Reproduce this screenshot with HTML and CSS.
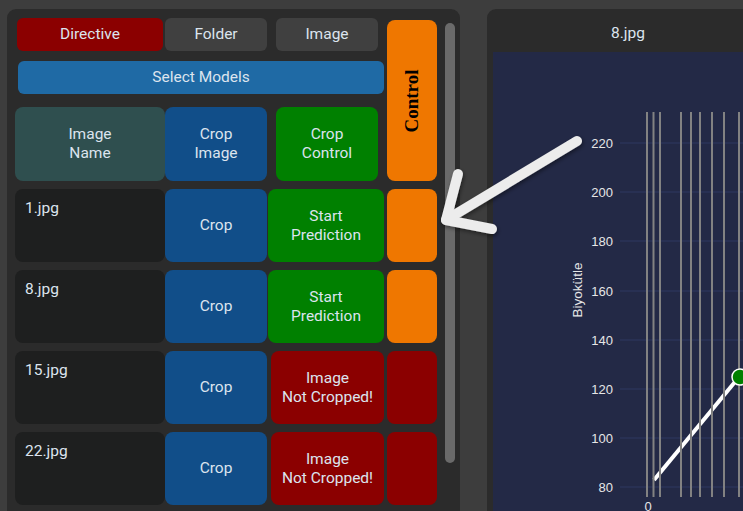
FILE: index.html
```html
<!DOCTYPE html>
<html>
<head>
<meta charset="utf-8">
<link rel="stylesheet" href="styles.css">
</head>
<body>
<div class="app">
  <section class="left-panel">
    <div class="table">
      <div class="btn red c0 r0 directive">Directive</div>
      <div class="btn gray c1 r0 mr1">Folder</div>
      <div class="btn gray c2 r0 image-btn">Image</div>
      <div class="control-head"><span>Control</span></div>

      <div class="btn blue select-models">Select Models</div>

      <div class="cell slate c0 r2">Image<br>Name</div>
      <div class="cell navy c1 r2 mr1">Crop<br>Image</div>
      <div class="cell green c2 r2 image-btn">Crop<br>Control</div>

      <div class="cell name c0 r3">1.jpg</div>
      <div class="cell navy c1 r3 mr1">Crop</div>
      <div class="cell green c2 r3">Start<br>Prediction</div>
      <div class="cell orange c3 r3"></div>

      <div class="cell name c0 r4">8.jpg</div>
      <div class="cell navy c1 r4 mr1">Crop</div>
      <div class="cell green c2 r4">Start<br>Prediction</div>
      <div class="cell orange c3 r4"></div>

      <div class="cell name c0 r5">15.jpg</div>
      <div class="cell navy c1 r5 mr1">Crop</div>
      <div class="cell red c2 r5 ml3">Image<br>Not Cropped!</div>
      <div class="cell red c3 r5"></div>

      <div class="cell name c0 r6">22.jpg</div>
      <div class="cell navy c1 r6 mr1">Crop</div>
      <div class="cell red c2 r6 ml3">Image<br>Not Cropped!</div>
      <div class="cell red c3 r6"></div>
    </div>
    <div class="scrollbar"></div>
  </section>

  <section class="right-panel">
    <div class="chart-title">8.jpg</div>
    <div class="chart">
      <svg class="chart-svg" width="276" height="460" viewBox="493 52 276 460">
        <g class="grid-h" stroke="#2e3961" stroke-width="1">
          <line x1="620" y1="143" x2="770" y2="143"/>
          <line x1="620" y1="192" x2="770" y2="192"/>
          <line x1="620" y1="241" x2="770" y2="241"/>
          <line x1="620" y1="291" x2="770" y2="291"/>
          <line x1="620" y1="340" x2="770" y2="340"/>
          <line x1="620" y1="389" x2="770" y2="389"/>
          <line x1="620" y1="438" x2="770" y2="438"/>
          <line x1="620" y1="487" x2="770" y2="487"/>
        </g>
        <g class="ylabels" fill="#e6e6e6" font-family="Liberation Sans, Arial, sans-serif" font-size="13" text-anchor="end">
          <text x="613" y="148">220</text>
          <text x="613" y="197">200</text>
          <text x="613" y="246">180</text>
          <text x="613" y="296">160</text>
          <text x="613" y="345">140</text>
          <text x="613" y="394">120</text>
          <text x="613" y="443">100</text>
          <text x="613" y="492">80</text>
        </g>
        <text x="648" y="511" fill="#e6e6e6" font-family="Liberation Sans, Arial, sans-serif" font-size="13" text-anchor="middle">0</text>
        <text transform="translate(582 290) rotate(-90)" fill="#e6e6e6" font-family="Liberation Sans, Arial, sans-serif" font-size="13.5" text-anchor="middle">Biyokütle</text>
        <line x1="654" y1="480" x2="739" y2="377" stroke="#ffffff" stroke-width="4"/>
        <g stroke="#828282" stroke-width="2">
          <line x1="647" y1="112" x2="647" y2="497"/>
          <line x1="653.5" y1="112" x2="653.5" y2="497"/>
          <line x1="660" y1="112" x2="660" y2="497"/>
          <line x1="681" y1="112" x2="681" y2="497"/>
          <line x1="691" y1="112" x2="691" y2="497"/>
          <line x1="700" y1="112" x2="700" y2="497"/>
          <line x1="712" y1="112" x2="712" y2="497"/>
          <line x1="724" y1="112" x2="724" y2="497"/>
          <line x1="739" y1="112" x2="739" y2="497"/>
          <line x1="758" y1="112" x2="758" y2="497"/>
        </g>
        <circle cx="740" cy="377" r="8" fill="#008000" stroke="#ffffff" stroke-width="1.5"/>
      </svg>
    </div>
  </section>

  <svg class="arrow" width="743" height="511" viewBox="0 0 743 511">
    <defs>
      <filter id="sh" x="-20%" y="-20%" width="140%" height="140%">
        <feDropShadow dx="1" dy="2" stdDeviation="2" flood-color="#000" flood-opacity="0.45"/>
      </filter>
    </defs>
    <g filter="url(#sh)" stroke="#ececec" stroke-width="10" stroke-linecap="round" stroke-linejoin="round" fill="none">
      <path d="M577 141 L446 220"/>
      <path d="M458 174 L446 220 L492 229"/>
    </g>
  </svg>
</div>
</body>
</html>
```
FILE: styles.css
```css
html, body {
  margin: 0;
  padding: 0;
}
body {
  width: 743px;
  height: 511px;
  overflow: hidden;
  background: #3d3d3d;
  font-family: Roboto, "Noto Sans", sans-serif;
  font-size: 15.5px;
  color: #dce4ee;
}
.app {
  position: relative;
  width: 743px;
  height: 511px;
  display: flex;
  align-items: flex-start;
  padding: 9px 0 0 7px;
  box-sizing: border-box;
  gap: 27px;
}
.left-panel {
  display: flex;
  align-items: flex-start;
  background: #2b2b2b;
  border-radius: 9px 9px 0 0;
  width: 453px;
  height: 520px;
  padding: 9px 5px 0 8px;
  box-sizing: border-box;
  flex: none;
}
.table {
  display: grid;
  grid-template-columns: 150px 103px 116px 56px;
  grid-template-rows: 43px 46px 82px 81px 81px 81px 81px;
  width: 425px;
  flex: none;
}
.scrollbar {
  width: 10px;
  height: 440px;
  margin-top: 5px;
  margin-left: 5px;
  border-radius: 5px;
  background: #6a6a6a;
  flex: none;
}
.btn, .cell {
  display: flex;
  align-items: center;
  justify-content: center;
  text-align: center;
  line-height: 19px;
  box-sizing: border-box;
}
.btn {
  height: 33px;
  border-radius: 6px;
}
.cell {
  border-radius: 8px;
  height: 73px;
}
.r2 { height: 74px; }

.c0 { grid-column: 1; }
.c1 { grid-column: 2; }
.c2 { grid-column: 3; }
.c3 { grid-column: 4; margin: 0 3px; }
.r0 { grid-row: 1; }
.r2 { grid-row: 3; }
.r3 { grid-row: 4; }
.r4 { grid-row: 5; }
.r5 { grid-row: 6; }
.r6 { grid-row: 7; }

.directive { margin: 0 2px; }
.mr1 { margin-right: 1px; }
.ml3 { margin-left: 3px; }
.image-btn { margin: 0 6px 0 8px; }

.select-models {
  grid-row: 2;
  grid-column: 1 / 4;
  margin-left: 3px;
}
.control-head {
  grid-row: 1 / 4;
  grid-column: 4;
  margin: 2px 3px 0 3px;
  height: 161px;
  background: #ef7700;
  border-radius: 8px;
  display: flex;
  align-items: center;
  justify-content: center;
}
.control-head span {
  transform: rotate(-90deg);
  font-family: "Liberation Serif", "Times New Roman", serif;
  font-weight: bold;
  font-size: 19px;
  color: #000;
  white-space: nowrap;
}

.red { background: #8b0000; }
.gray { background: #404040; }
.blue { background: #1f6aa5; }
.navy { background: #114e89; }
.slate { background: #2f4f4f; }
.green { background: #008000; }
.orange { background: #ef7700; }
.name {
  background: #1e1f1f;
  align-items: flex-start;
  justify-content: flex-start;
  padding: 10px 0 0 10px;
  text-align: left;
}

.right-panel {
  flex: none;
  width: 282px;
  height: 520px;
  background: #2b2b2b;
  border-radius: 9px 9px 0 0;
  display: flex;
  flex-direction: column;
}
.chart-title {
  height: 43px;
  line-height: 49px;
  text-align: center;
}
.chart {
  margin-left: 6px;
  width: 276px;
  height: 470px;
  background: #232946;
  overflow: hidden;
}
.chart-svg {
  display: block;
}
.arrow {
  position: absolute;
  left: 0;
  top: 0;
  pointer-events: none;
}
```
